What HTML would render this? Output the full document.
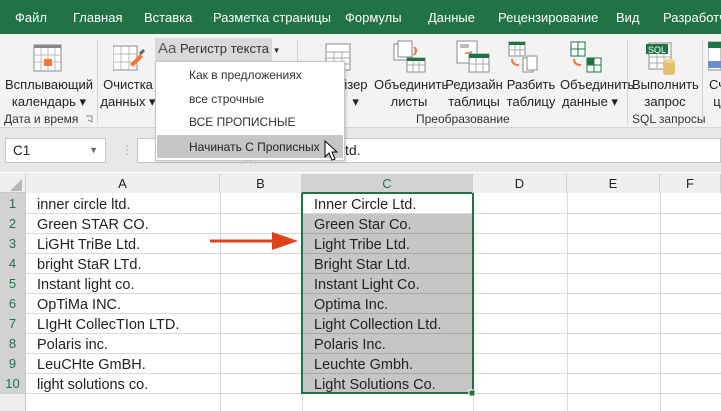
<!DOCTYPE html>
<html><head><meta charset="utf-8"><style>
*{margin:0;padding:0;box-sizing:border-box}
body{width:721px;height:411px;overflow:hidden;position:relative;background:#fff;font-family:"Liberation Sans",Arial,sans-serif}
.a{position:absolute;white-space:nowrap}
.tab{color:#fff;font-size:13px;top:10px}
.rl{font-size:13px;color:#222;text-align:center;line-height:17px}
.gl{font-size:12px;color:#333;top:112px}
.sep{position:absolute;width:1px;background:#d4d4d4;top:40px;height:84px}
.cell{position:absolute;font-size:14.5px;color:#222;line-height:20px}
.h{position:absolute;top:174px;height:19px;font-size:13px;color:#222;text-align:center;line-height:19px;background:#efefef;border-right:1px solid #d0d0d0}
.rn{position:absolute;left:0;width:25px;height:20px;font-size:13px;color:#333;text-align:center;line-height:22px;background:#efefef;border-bottom:1px solid #d0d0d0}
</style></head><body>
<div class="a" style="left:0;top:0;width:721px;height:34px;background:#217346"></div>
<div class="a tab" style="left:15px">Файл</div>
<div class="a tab" style="left:73px">Главная</div>
<div class="a tab" style="left:144px">Вставка</div>
<div class="a tab" style="left:213px">Разметка страницы</div>
<div class="a tab" style="left:345px">Формулы</div>
<div class="a tab" style="left:428px">Данные</div>
<div class="a tab" style="left:498px">Рецензирование</div>
<div class="a tab" style="left:616px">Вид</div>
<div class="a tab" style="left:663px">Разработч</div>
<div class="a" style="left:0;top:34px;width:721px;height:94px;background:#f3f3f3;border-bottom:1px solid #d6d6d6"></div>
<div class="sep" style="left:97px"></div><div class="sep" style="left:297px"></div><div class="sep" style="left:627px"></div><div class="sep" style="left:702px"></div>
<svg class="a" style="left:33px;top:43px" width="30" height="30"><rect x="1" y="2" width="27" height="26" fill="#fff" stroke="#888"/><rect x="1" y="2" width="27" height="3" fill="#888"/><path d="M1 12h27M1 19h27M8 5v23M15 5v23M22 5v23" stroke="#bbb"/><rect x="11" y="16" width="8" height="7" fill="#f07a3a"/></svg>
<div class="a rl" style="left:4px;top:76px;width:90px">Всплывающий<br>календарь ▾</div>
<div class="a gl" style="left:4px">Дата и время</div>
<svg class="a" style="left:85px;top:115px" width="8" height="8"><path d="M1 1h6v6M3 5l4 2" stroke="#888" fill="none"/></svg>
<svg class="a" style="left:113px;top:43px" width="32" height="30"><rect x="0" y="3" width="24" height="24" fill="#fff" stroke="#888"/><path d="M0 11h24M0 19h24M8 3v24M16 3v24" stroke="#bbb"/><path d="M17 21l10-10 3 3-10 10z" fill="#f07a3a"/><path d="M26 10l4-4 2 2-4 4z" fill="#666"/></svg>
<div class="a rl" style="left:100px;top:76px;width:56px">Очистка<br>данных ▾</div>
<svg class="a" style="left:324px;top:42px" width="30" height="30"><rect x="2" y="2" width="24" height="26" fill="#fff" stroke="#888"/><path d="M2 10h24M2 16h24M2 22h24M10 10v18M18 10v18" stroke="#aaa"/></svg>
<div class="a rl" style="left:340px;top:76px">йзер<br>&nbsp;▾</div>
<svg class="a" style="left:392px;top:40px" width="36" height="36"><rect x="2" y="4" width="14" height="16" fill="#fff" stroke="#888"/><rect x="6" y="1" width="14" height="16" fill="#fff" stroke="#888"/><path d="M22 7q4 3 0 8" stroke="#f07a3a" fill="none" stroke-width="2"/><rect x="15" y="18" width="18" height="14" fill="#fff" stroke="#888"/><rect x="15" y="18" width="18" height="3" fill="#217346"/><path d="M15 25h18M21 21v11M27 21v11" stroke="#aaa"/></svg>
<div class="a rl" style="left:374px;top:76px;width:70px">Объединить<br>листы</div>
<svg class="a" style="left:455px;top:40px" width="36" height="36"><rect x="2" y="1" width="20" height="22" fill="#fff" stroke="#888"/><rect x="5" y="4" width="9" height="4" fill="#bbb"/><path d="M10 13h6M16 11v4" stroke="#f07a3a" stroke-width="1.5"/><rect x="14" y="14" width="20" height="18" fill="#fff" stroke="#888"/><rect x="14" y="14" width="20" height="4" fill="#217346"/><path d="M14 24h20M21 18v14M28 18v14" stroke="#aaa"/></svg>
<div class="a rl" style="left:444px;top:76px;width:60px">Редизайн<br>таблицы</div>
<svg class="a" style="left:507px;top:40px" width="36" height="36"><rect x="2" y="2" width="16" height="14" fill="#fff" stroke="#888"/><rect x="2" y="2" width="16" height="3" fill="#217346"/><path d="M2 10h16M8 5v11M13 5v11" stroke="#aaa"/><path d="M5 19q0 6 7 6" stroke="#f07a3a" fill="none" stroke-width="2"/><rect x="16" y="18" width="10" height="14" fill="#fff" stroke="#888"/><rect x="20" y="16" width="10" height="14" fill="#fff" stroke="#888"/></svg>
<div class="a rl" style="left:503px;top:76px;width:56px">Разбить<br>таблицу</div>
<svg class="a" style="left:569px;top:40px" width="36" height="36"><rect x="2" y="2" width="14" height="14" fill="#fff" stroke="#217346"/><path d="M2 9h14M9 2v14" stroke="#217346"/><path d="M5 19q0 6 7 6" stroke="#f07a3a" fill="none" stroke-width="2"/><rect x="18" y="18" width="14" height="14" fill="#fff" stroke="#217346"/><rect x="18" y="18" width="7" height="7" fill="#217346"/><path d="M18 25h14M25 18v14" stroke="#217346"/></svg>
<div class="a rl" style="left:560px;top:76px;width:60px">Объединить<br>данные ▾</div>
<div class="a gl" style="left:416px">Преобразование</div>
<svg class="a" style="left:645px;top:41px" width="40" height="36"><rect x="4" y="2" width="22" height="26" fill="#fff" stroke="#888"/><path d="M4 16h22M4 22h22M12 2v26M19 2v26" stroke="#aaa"/><rect x="1" y="3" width="22" height="10" fill="#217346"/><text x="3" y="12" font-size="9" fill="#fff" font-family="Liberation Sans">SQL</text><rect x="18" y="20" width="12" height="14" rx="3" fill="#e3c06e"/><ellipse cx="24" cy="20" rx="6" ry="2" fill="#f0d58c"/></svg>
<div class="a rl" style="left:632px;top:76px;width:66px">Выполнить<br>запрос</div>
<div class="a gl" style="left:632px">SQL запросы</div>
<svg class="a" style="left:708px;top:41px" width="13" height="30"><rect x="0" y="1" width="13" height="28" fill="#fff" stroke="#888"/><rect x="0" y="1" width="13" height="6" fill="#217346"/><rect x="0" y="20" width="13" height="7" fill="#6a8fd0"/></svg>
<div class="a rl" style="left:709px;top:76px">Сч<br>ц</div>
<div class="a" style="left:0;top:128px;width:721px;height:44px;background:#e8e8e8"></div>
<div class="a" style="left:5px;top:138px;width:101px;height:25px;background:#fff;border:1px solid #c8c8c8;font-size:13.5px;line-height:23px;padding-left:7px;color:#222">C1<span style="position:absolute;right:7px;top:0;font-size:9px;color:#666">▼</span></div>
<div class="a" style="left:121px;top:143px;color:#aaa;font-size:12px">⋮</div>
<div class="a" style="left:137px;top:138px;width:110px;height:25px;background:#fff;border:1px solid #c8c8c8"></div>
<div class="a" style="left:250px;top:138px;width:471px;height:25px;background:#fff;border:1px solid #c8c8c8;font-size:14px;line-height:23px;color:#222"><span style="position:absolute;left:94px">td.</span></div>
<div class="a" style="left:155px;top:38px;width:117px;height:23px;background:#d9d9d9;font-size:13px;color:#333;line-height:22px;padding-left:3px"><span style="font-size:15px;color:#555">Aa</span> Регистр текста <span style="font-size:8px">▼</span></div>
<div class="a" style="left:155px;top:61px;width:190px;height:100px;background:#fff;border:1px solid #c6c6c6;box-shadow:1px 1px 3px rgba(0,0,0,.2)"></div>
<div class="a" style="left:189px;top:68px;font-size:12px;color:#333">Как в предложениях</div>
<div class="a" style="left:189px;top:92px;font-size:12px;color:#333">все строчные</div>
<div class="a" style="left:189px;top:115px;font-size:12px;color:#333">ВСЕ ПРОПИСНЫЕ</div>
<div class="a" style="left:157px;top:135px;width:186px;height:23px;background:#c6c6c6"></div>
<div class="a" style="left:189px;top:140px;font-size:12px;color:#222">Начинать С Прописных</div>
<svg class="a" style="left:324px;top:140px" width="14" height="22"><path d="M1 1v16l4-4 3 7 3-1-3-7h5z" fill="#fff" stroke="#000"/></svg>
<div class="a" style="left:0;top:173px;width:721px;height:20px;background:#efefef;border-bottom:1px solid #c8c8c8"></div>
<svg class="a" style="left:10px;top:179px" width="13" height="13"><path d="M12 0v12H0z" fill="#b8b8b8"/></svg>
<div class="h" style="left:25px;width:195px;border-left:1px solid #d0d0d0">A</div>
<div class="h" style="left:220px;width:82px">B</div>
<div class="h" style="left:302px;width:171px;background:#d2d2d2;color:#217346;border-bottom:2px solid #217346;height:20px">C</div>
<div class="h" style="left:473px;width:94px">D</div>
<div class="h" style="left:567px;width:93px">E</div>
<div class="h" style="left:660px;width:61px">F</div>
<svg class="a" style="left:0;top:193px" width="721" height="218">
<g stroke="#d9d9d9" stroke-width="1">
<path d="M0 20.5h721M0 40.5h721M0 60.5h721M0 80.5h721M0 100.5h721M0 120.5h721M0 140.5h721M0 160.5h721M0 180.5h721M0 200.5h721"/>
<path d="M220.5 0v218M302.5 0v218M473.5 0v218M567.5 0v218M660.5 0v218"/>
</g>
<rect x="303" y="21" width="169" height="179" fill="#c6c6c6"/>
<path d="M303 40.5h169M303 60.5h169M303 80.5h169M303 100.5h169M303 120.5h169M303 140.5h169M303 160.5h169M303 180.5h169" stroke="#a8a8a8"/>
<rect x="0" y="0" width="25" height="218" fill="#efefef"/>
<path d="M0 20.5h25M0 40.5h25M0 60.5h25M0 80.5h25M0 100.5h25M0 120.5h25M0 140.5h25M0 160.5h25M0 180.5h25M0 200.5h25" stroke="#d0d0d0"/>
<path d="M25.5 0v218" stroke="#c8c8c8"/>
<rect x="23" y="0" width="2" height="200" fill="#217346"/>
<rect x="302" y="0" width="171" height="200" fill="none" stroke="#217346" stroke-width="2"/>
<rect x="469" y="197" width="6" height="6" fill="#217346" stroke="#fff"/>
<path d="M210 48h70" stroke="#e0401a" stroke-width="3"/><path d="M272 39l26 9-26 9z" fill="#e0401a"/>
</svg>
<div class="rn" style="top:193px;background:#d2d2d2;color:#217346">1</div>
<div class="rn" style="top:213px;background:#d2d2d2;color:#217346">2</div>
<div class="rn" style="top:233px;background:#d2d2d2;color:#217346">3</div>
<div class="rn" style="top:253px;background:#d2d2d2;color:#217346">4</div>
<div class="rn" style="top:273px;background:#d2d2d2;color:#217346">5</div>
<div class="rn" style="top:293px;background:#d2d2d2;color:#217346">6</div>
<div class="rn" style="top:313px;background:#d2d2d2;color:#217346">7</div>
<div class="rn" style="top:333px;background:#d2d2d2;color:#217346">8</div>
<div class="rn" style="top:353px;background:#d2d2d2;color:#217346">9</div>
<div class="rn" style="top:373px;background:#d2d2d2;color:#217346">10</div>
<div class="cell" style="left:37px;top:195px">inner circle ltd.</div>
<div class="cell" style="left:37px;top:215px">Green STAR CO.</div>
<div class="cell" style="left:37px;top:235px">LiGHt TriBe Ltd.</div>
<div class="cell" style="left:37px;top:255px">bright StaR LTd.</div>
<div class="cell" style="left:37px;top:275px">Instant light co.</div>
<div class="cell" style="left:37px;top:295px">OpTiMa INC.</div>
<div class="cell" style="left:37px;top:315px">LIgHt CollecTIon LTD.</div>
<div class="cell" style="left:37px;top:335px">Polaris inc.</div>
<div class="cell" style="left:37px;top:355px">LeuCHte GmBH.</div>
<div class="cell" style="left:37px;top:375px">light solutions co.</div>
<div class="cell" style="left:314px;top:195px">Inner Circle Ltd.</div>
<div class="cell" style="left:314px;top:215px">Green Star Co.</div>
<div class="cell" style="left:314px;top:235px">Light Tribe Ltd.</div>
<div class="cell" style="left:314px;top:255px">Bright Star Ltd.</div>
<div class="cell" style="left:314px;top:275px">Instant Light Co.</div>
<div class="cell" style="left:314px;top:295px">Optima Inc.</div>
<div class="cell" style="left:314px;top:315px">Light Collection Ltd.</div>
<div class="cell" style="left:314px;top:335px">Polaris Inc.</div>
<div class="cell" style="left:314px;top:355px">Leuchte Gmbh.</div>
<div class="cell" style="left:314px;top:375px">Light Solutions Co.</div>
</body></html>
